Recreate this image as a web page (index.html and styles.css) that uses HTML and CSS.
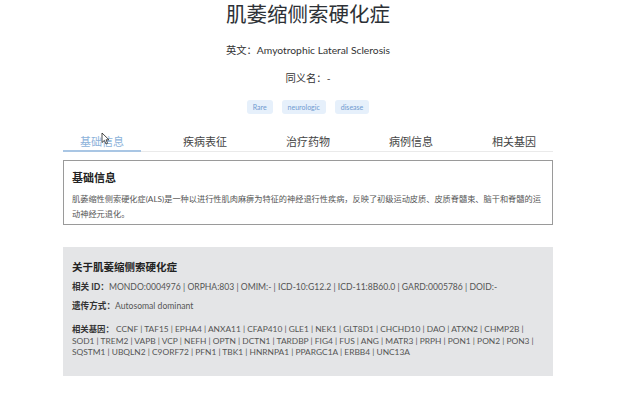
FILE: index.html
```html
<!DOCTYPE html>
<html lang="zh-CN">
<head>
  <meta charset="UTF-8" />
  <meta name="viewport" content="width=device-width, initial-scale=1.0" />
  <title>肌萎缩侧索硬化症</title>
  <link rel="stylesheet" href="styles.css">
</head>
<body>
  <div class="page">
    <div class="container">

      <!-- Disease header -->
      <header class="disease-header">
        <h1>肌萎缩侧索硬化症</h1>
        <p class="meta meta-en">英文：Amyotrophic Lateral Sclerosis</p>
        <p class="meta meta-syn">同义名：-</p>
        <div class="tags">
          <span class="tag">Rare</span>
          <span class="tag">neurologic</span>
          <span class="tag">disease</span>
        </div>
      </header>

      <!-- Tabs -->
      <nav class="tabs">
        <a href="#" class="tab active">基础信息</a>
        <a href="#" class="tab">疾病表征</a>
        <a href="#" class="tab">治疗药物</a>
        <a href="#" class="tab">病例信息</a>
        <a href="#" class="tab">相关基因</a>
        <!-- mouse pointer over first tab -->
        <svg class="cursor" width="9" height="13" viewBox="0 0 9 13">
          <path d="M1 1 L1 10.5 L3.4 8.4 L5 12 L6.6 11.3 L5 7.8 L8 7.8 Z" fill="#fff" stroke="#222" stroke-width="0.8" stroke-linejoin="round"/>
        </svg>
      </nav>

      <!-- Basic info -->
      <section class="info-card">
        <h3>基础信息</h3>
        <p>肌萎缩性侧索硬化症(ALS)是一种以进行性肌肉麻痹为特征的神经退行性疾病，反映了初级运动皮质、皮质脊髓束、脑干和脊髓的运动神经元退化。</p>
      </section>

      <!-- About -->
      <section class="about-card">
        <h3>关于肌萎缩侧索硬化症</h3>
        <p class="row"><b>相关 ID：</b>MONDO:0004976 | ORPHA:803 | OMIM:- | ICD-10:G12.2 | ICD-11:8B60.0 | GARD:0005786 | DOID:-</p>
        <p class="row"><b>遗传方式：</b>Autosomal dominant</p>
        <p class="row genes"><b>相关基因：</b> CCNF | TAF15 | EPHA4 | ANXA11 | CFAP410 | GLE1 | NEK1 | GLT8D1 | CHCHD10 | DAO | ATXN2 | CHMP2B | SOD1 | TREM2 | VAPB | VCP | NEFH | OPTN | DCTN1 | TARDBP | FIG4 | FUS | ANG | MATR3 | PRPH | PON1 | PON2 | PON3 | SQSTM1 | UBQLN2 | C9ORF72 | PFN1 | TBK1 | HNRNPA1 | PPARGC1A | ERBB4 | UNC13A</p>
      </section>

    </div>
  </div>
</body>
</html>
```

FILE: styles.css
```css
/* Basic Reset */
* {
  margin: 0;
  padding: 0;
  box-sizing: border-box;
}

body {
  font-family: Lato, "Noto Sans CJK SC", sans-serif;
  background-color: #fff;
  color: #333;
  overflow: hidden;
}

.page {
  width: 616px;
}

.container {
  width: 490px;
  margin: 0 auto;
}

/* Header */
.disease-header {
  text-align: center;
}

.disease-header h1 {
  font-size: 20.5px;
  line-height: 28px;
  font-weight: 400;
  color: #2d3136;
}

.meta {
  font-size: 10.3px;
  line-height: 16px;
  color: #333;
}

.meta-en {
  margin-top: 14px;
}

.meta-syn {
  margin-top: 12px;
}

.tags {
  display: flex;
  justify-content: center;
  gap: 9px;
  margin-top: 14px;
}

.tag {
  height: 14px;
  line-height: 14px;
  padding: 0 6px;
  font-size: 7px;
  color: #6f9ad0;
  background-color: #e6f0fb;
  border-radius: 3px;
}

/* Tabs */
.tabs {
  position: relative;
  display: flex;
  justify-content: space-between;
  margin-top: 21px;
  border-bottom: 1px solid #eaeaea;
}

.tab {
  padding: 0 17px 1px;
  font-size: 11px;
  line-height: 14px;
  color: #444;
  text-decoration: none;
  border-bottom: 2px solid transparent;
  margin-bottom: -1px;
}

.tab.active {
  color: #8db2da;
  border-bottom-color: #a9c6e4;
}

.cursor {
  position: absolute;
  left: 38px;
  top: -3px;
}

/* Basic info card */
.info-card {
  margin-top: 8px;
  border: 1px solid #9a9a9a;
  padding: 10px 8px 2px 8px;
}

.info-card h3 {
  font-size: 11px;
  line-height: 14px;
  font-weight: bold;
  color: #222;
}

.info-card p {
  margin-top: 7px;
  font-size: 8.2px;
  line-height: 15px;
  color: #555;
}

/* About card */
.about-card {
  margin-top: 22px;
  background-color: #e4e5e7;
  padding: 13px 8px 17px 9px;
}

.about-card h3 {
  font-size: 10.5px;
  line-height: 14px;
  font-weight: bold;
  color: #222;
}

.row {
  margin-top: 7px;
  font-size: 8.6px;
  line-height: 12px;
  color: #555;
}

.row b {
  color: #333;
}

.row.genes {
  margin-top: 12px;
  font-size: 8.4px;
  line-height: 11.5px;
}
```
